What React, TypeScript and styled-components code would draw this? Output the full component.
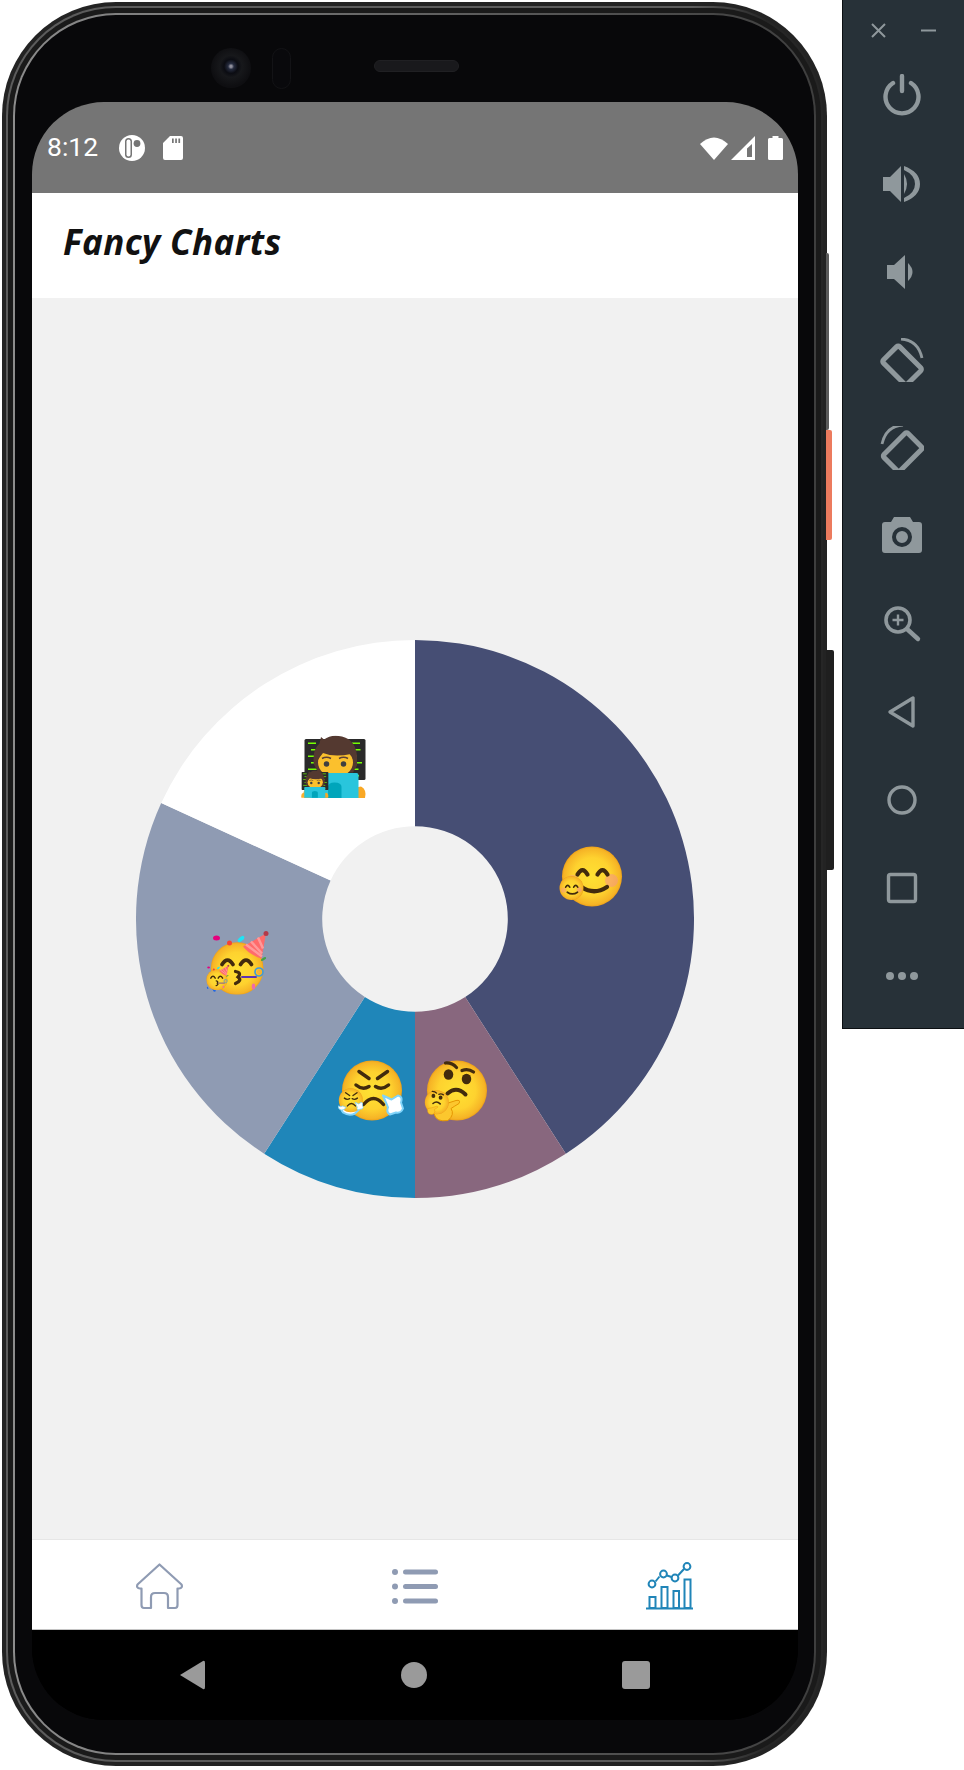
import React from 'react';
import styled, { createGlobalStyle } from 'styled-components';

const GlobalStyle = createGlobalStyle`
    html, body {
        margin: 0;
        padding: 0;
        background: #ffffff;
    }
`;

const Page = styled.div`
    width: 964px;
    height: 1770px;
    display: flex;
    justify-content: space-between;
    align-items: flex-start;
    overflow: hidden;
`;

const Shell = styled.div`
    position: relative;
    box-sizing: border-box;
    width: 825px;
    height: 1764px;
    margin: 2px 0 0 2px;
    padding: 4px;
    border-radius: 114px;
    background: #232323;
`;

const RimLight = styled.div`
    box-sizing: border-box;
    height: 100%;
    padding: 2px;
    border-radius: 110px;
    background: linear-gradient(90deg, #5c5c5c 0%, #5c5c5c 84%, #262626 93%);
`;

const RimDark = styled.div`
    box-sizing: border-box;
    height: 100%;
    padding: 5px;
    border-radius: 108px;
    background: #1a1a1a;
`;

const RimInner = styled.div`
    box-sizing: border-box;
    height: 100%;
    padding: 2px;
    border-radius: 103px;
    background: linear-gradient(90deg, #8c8c8c 0%, #5a5a5a 60%, #3e3e3e 100%);
`;

const Bezel = styled.div`
    box-sizing: border-box;
    height: 100%;
    display: flex;
    flex-direction: column;
    padding: 0 16px 33px 17px;
    border-radius: 101px;
    background: #08080a;
`;

const SideKey = styled.div<{ $top: number; $height: number; $width: number; $color: string }>`
    position: absolute;
    left: 824px;
    top: ${(p) => p.$top}px;
    width: ${(p) => p.$width}px;
    height: ${(p) => p.$height}px;
    border-radius: 0 2px 2px 0;
    background: ${(p) => p.$color};
`;

const Earpiece = styled.div`
    height: 87px;
    flex-shrink: 0;
    display: flex;
    align-items: center;
    padding: 19px 0 0 179px;
    box-sizing: border-box;
`;

const Lens = styled.div`
    width: 40px;
    height: 40px;
    border-radius: 50%;
    background: radial-gradient(circle at 50% 46%, #8f8f9c 0 1px, #252b3e 3px, #0b0c12 7px, #17181b 11px, #0e0e11 20px);
`;

const Sensor = styled.div`
    box-sizing: border-box;
    width: 19px;
    height: 41px;
    margin-left: 21px;
    border: 1px solid #131316;
    border-radius: 10px;
    background: #09090c;
`;

const Speaker = styled.div`
    box-sizing: border-box;
    width: 85px;
    height: 12px;
    margin: 0 0 4px 83px;
    border: 1px solid #202023;
    border-radius: 6px;
    background: #19191c;
`;

const Screen = styled.div`
    flex: 1;
    display: flex;
    flex-direction: column;
    overflow: hidden;
    border-radius: 72px;
    background: #000000;
`;

const StatusBar = styled.div`
    height: 91px;
    flex-shrink: 0;
    box-sizing: border-box;
    display: flex;
    align-items: center;
    padding: 0 15px 0 15px;
    background: #757575;
    color: #ffffff;
    font-family: Roboto, 'Liberation Sans', sans-serif;
    font-size: 26.5px;
`;

const Clock = styled.span`
    width: 72px;
    line-height: 1;
`;

const StatusGroup = styled.div<{ $gap: number; $left?: number }>`
    display: flex;
    align-items: center;
    column-gap: ${(p) => p.$gap}px;
    margin-left: ${(p) => p.$left ?? 0}px;
`;

const StatusSpacer = styled.div`
    flex: 1;
`;

const Header = styled.div`
    height: 105px;
    flex-shrink: 0;
    box-sizing: border-box;
    display: flex;
    align-items: center;
    padding: 0 0 9px 31px;
    background: #ffffff;
`;

const Title = styled.h1`
    margin: 0;
    font-family: 'Noto Sans', sans-serif;
    font-size: 35px;
    font-weight: 700;
    font-style: italic;
    color: #111111;
    letter-spacing: 0.4px;
`;

const Content = styled.div`
    flex: 1;
    display: flex;
    align-items: center;
    justify-content: center;
    background: #f1f1f1;
`;

const TabBar = styled.div`
    height: 91px;
    flex-shrink: 0;
    box-sizing: border-box;
    display: grid;
    grid-template-columns: repeat(3, 1fr);
    border-top: 1px solid #e6e6e6;
    border-bottom: 1px solid #c4c4c4;
    background: #ffffff;
`;

const Tab = styled.div<{ $top: number }>`
    display: flex;
    justify-content: center;
    align-items: flex-start;
    padding-top: ${(p) => p.$top}px;
`;

const NavBar = styled.div`
    height: 90px;
    flex-shrink: 0;
    box-sizing: border-box;
    display: flex;
    align-items: center;
    justify-content: space-between;
    padding: 0 148px 0 147px;
    background: #000000;
`;

const NavHome = styled.div`
    width: 26px;
    height: 26px;
    border-radius: 50%;
    background: #9a9a9a;
`;

const NavRecents = styled.div`
    width: 28px;
    height: 28px;
    border-radius: 3px;
    background: #9a9a9a;
`;

const Toolbar = styled.div`
    box-sizing: border-box;
    width: 122px;
    height: 1029px;
    border: 1px solid #0b0f12;
    border-top: none;
    border-right: none;
    background: #273138;
    color: #8f989c;
`;

const ToolbarTop = styled.div`
    height: 52px;
    box-sizing: border-box;
    display: flex;
    align-items: center;
    justify-content: space-between;
    padding: 8px 28px 0 28px;
`;

const ToolButton = styled.div`
    height: 88px;
    display: flex;
    align-items: center;
    justify-content: center;
    padding-right: 3px;
`;

type SliceData = { value: number; color: string };

const slices: SliceData[] = [
    { value: 45, color: '#464e74' },
    { value: 10, color: '#88677e' },
    { value: 10, color: '#1f86b9' },
    { value: 25, color: '#8f9bb3' },
    { value: 20, color: '#ffffff' },
];

const OUTER = 279;
const INNER = 92.8;

function polar(radius: number, angle: number) {
    const a = (angle * Math.PI) / 180;
    return `${(radius * Math.sin(a)).toFixed(2)} ${(-radius * Math.cos(a)).toFixed(2)}`;
}

function slicePath(start: number, end: number) {
    const large = end - start > 180 ? 1 : 0;
    return `M${polar(OUTER, start)} A${OUTER} ${OUTER} 0 ${large} 1 ${polar(OUTER, end)} L${polar(INNER, end)} A${INNER} ${INNER} 0 ${large} 0 ${polar(INNER, start)} Z`;
}

function FaceBase({ id }: { id: string }) {
    return (
        <>
            <defs>
                <radialGradient id={id} cx="50%" cy="50%" r="52%">
                    <stop offset="0%" stopColor="#fee133" />
                    <stop offset="60%" stopColor="#fed22f" />
                    <stop offset="90%" stopColor="#f6b426" />
                    <stop offset="100%" stopColor="#e8940f" />
                </radialGradient>
            </defs>
            <circle cx="64" cy="64" r="60" fill={`url(#${id})`} />
        </>
    );
}

function SmilingGlyph({ id }: { id: string }) {
    return (
        <>
            <FaceBase id={id} />
            <circle cx="25" cy="74" r="13" fill="#f59a80" opacity="0.55" />
            <circle cx="103" cy="72" r="13" fill="#f59a80" opacity="0.6" />
            <path d="M35 60 Q45 42 55 60 M75 60 Q85 42 95 60" fill="none" stroke="#422b0d" strokeWidth="8.5" strokeLinecap="round" />
            <path d="M43 85 Q68 102 94 85" fill="none" stroke="#422b0d" strokeWidth="8.5" strokeLinecap="round" />
        </>
    );
}

function ThinkingGlyph({ id }: { id: string }) {
    return (
        <>
            <FaceBase id={id} />
            <ellipse cx="47" cy="32" rx="9.5" ry="10.5" fill="#422b0d" />
            <ellipse cx="83" cy="41" rx="9.5" ry="10.5" fill="#422b0d" />
            <path d="M41 9 Q54 8 63 18 M74 24 Q86 19 97 27" fill="none" stroke="#422b0d" strokeWidth="6.5" strokeLinecap="round" />
            <path d="M45 70 Q63 54 81 72" fill="none" stroke="#422b0d" strokeWidth="8" strokeLinecap="round" />
            <path d="M18 96 Q40 92 62 84 Q72 82 68 90 Q58 96 52 100 Q60 112 46 124 Q22 128 18 110 Z" fill="#fcc72e" stroke="#e59600" strokeWidth="2" />
        </>
    );
}

function SteamGlyph({ id }: { id: string }) {
    return (
        <>
            <FaceBase id={id} />
            <path d="M38 26 L58 40 M95 26 L75 40" fill="none" stroke="#422b0d" strokeWidth="7" strokeLinecap="round" />
            <path d="M32 53 Q45 64 58 56 M71 56 Q84 64 97 53" fill="none" stroke="#422b0d" strokeWidth="7" strokeLinecap="round" />
            <path d="M47 92 Q67 68 87 92" fill="none" stroke="#422b0d" strokeWidth="7" strokeLinecap="round" />
            <path d="M86 74 L103 82 L116 74 Q126 76 122 88 L126 100 Q122 110 112 108 L100 112 Q92 108 96 98 Z" fill="#ffffff" stroke="#81d4fa" strokeWidth="4" strokeLinejoin="round" />
            <path d="M2 92 L14 96 L24 92 L40 100 L30 110 Q18 116 6 108 Q0 100 2 92 Z" fill="#ffffff" stroke="#81d4fa" strokeWidth="4" strokeLinejoin="round" />
        </>
    );
}

function PartyGlyph({ id }: { id: string }) {
    return (
        <>
            <g transform="translate(8 20) scale(0.88)">
                <FaceBase id={id} />
            </g>
            <path d="M122 6 L76 32 Q88 48 113 56 Z" fill="#ff6b6b" />
            <path d="M106 14 L116 36 M92 22 L114 46 M82 28 L114 52" stroke="#ff9a9a" strokeWidth="5" fill="none" />
            <circle cx="122" cy="6" r="5" fill="#b33a4a" />
            <path d="M34 68 Q45 50 56 68 M71 68 Q82 50 93 68" fill="none" stroke="#422b0d" strokeWidth="7.5" strokeLinecap="round" />
            <path d="M61 82 Q74 84 66 93 Q75 100 61 106" fill="none" stroke="#422b0d" strokeWidth="6.5" strokeLinecap="round" />
            <path d="M74 93 H102" stroke="#5e35b1" strokeWidth="4" strokeLinecap="round" />
            <circle cx="108" cy="83" r="8" fill="none" stroke="#3f9bdb" strokeWidth="3.4" />
            <circle cx="108" cy="83" r="3" fill="none" stroke="#f4a742" strokeWidth="2" />
            <ellipse cx="23" cy="15" rx="7" ry="5" fill="#e6007e" />
            <circle cx="49" cy="25" r="5" fill="#f44336" />
            <ellipse cx="72" cy="17" rx="8" ry="4" fill="#1fe3f5" transform="rotate(-40 72 17)" />
            <ellipse cx="117" cy="57" rx="6" ry="2.5" fill="#43a047" transform="rotate(-30 117 57)" />
            <ellipse cx="97" cy="112" rx="3.5" ry="6" fill="#f06ba8" />
            <ellipse cx="18" cy="117" rx="3" ry="6" fill="#1e66e5" transform="rotate(-25 18 117)" />
        </>
    );
}

function CoderGlyph() {
    const rows = [14, 27, 40, 53, 66, 79];
    return (
        <>
            <rect x="3" y="7" width="122" height="82" rx="3" fill="#2a2a2a" />
            {rows.map((y, i) => (
                <g key={y}>
                    <rect x={10 + (i % 2) * 6} y={y} width={16 + (i % 3) * 6} height="3" fill="#76ff03" />
                    <rect x={98 + (i % 2) * 4} y={y} width={16 - (i % 3) * 3} height="3" fill="#76ff03" />
                </g>
            ))}
            <path d="M22 58 Q18 30 40 18 H90 Q110 30 108 60 L100 74 H30 Z" fill="#543930" />
            <ellipse cx="65" cy="54" rx="35" ry="29" fill="#fbc02d" />
            <path d="M28 52 Q34 42 40 35 Q62 44 96 37 Q100 43 101 52 L108 52 Q110 10 78 2 Q56 -3 42 8 L36 3 L33 16 Q18 28 22 58 Z" fill="#543930" />
            <circle cx="47" cy="57" r="5.5" fill="#404040" />
            <circle cx="81" cy="57" r="5.5" fill="#404040" />
            <path d="M38 46 Q47 41 56 46 M72 46 Q81 41 90 46" fill="none" stroke="#5d4037" strokeWidth="3" />
            <path d="M2 125 Q-2 108 10 102 L20 104 V125 Z" fill="#fbb02d" />
            <path d="M124 125 Q128 108 116 102 L106 104 V125 Z" fill="#f9a825" />
            <path d="M15 79 Q15 75 19 75 H107 Q111 75 111 79 V125 H15 Z" fill="#29c5dc" />
            <path d="M50 125 V103 Q50 94 63 94 Q77 94 77 103 V125 Z" fill="#00a5bb" />
        </>
    );
}

type EmojiProps = { x: number; y: number; size: number; children: React.ReactNode };

function Emoji({ x, y, size, children }: EmojiProps) {
    return (
        <svg x={x - 415} y={y - 918.5} width={size} height={size} viewBox="0 0 128 128">
            {children}
        </svg>
    );
}

function DonutChart() {
    const total = slices.reduce((sum, s) => sum + s.value, 0);
    let angle = 0;
    return (
        <svg width={558} height={558} viewBox="-279 -279 558 558">
            {slices.map((s) => {
                const start = angle;
                angle += (s.value / total) * 360;
                return <path key={s.color} d={slicePath(start, angle)} fill={s.color} />;
            })}
            <Emoji x={560} y={844} size={64}><SmilingGlyph id="smileA" /></Emoji>
            <Emoji x={558.7} y={874.7} size={25.6}><SmilingGlyph id="smileB" /></Emoji>
            <Emoji x={425} y={1058} size={64}><ThinkingGlyph id="thinkA" /></Emoji>
            <Emoji x={424} y={1089} size={25.6}><ThinkingGlyph id="thinkB" /></Emoji>
            <Emoji x={340} y={1058} size={64}><SteamGlyph id="steamA" /></Emoji>
            <Emoji x={338} y={1087} size={25.6}><SteamGlyph id="steamB" /></Emoji>
            <Emoji x={205} y={930} size={64}><PartyGlyph id="partyA" /></Emoji>
            <Emoji x={204} y={964} size={25.6}><PartyGlyph id="partyB" /></Emoji>
            <Emoji x={303} y={735} size={64}><CoderGlyph /></Emoji>
            <Emoji x={301} y={770} size={28}><CoderGlyph /></Emoji>
        </svg>
    );
}

function HomeIcon() {
    return (
        <svg width="48" height="47" viewBox="0 0 48 47" fill="none" stroke="#8f9bb3" strokeWidth="2.2" strokeLinejoin="round">
            <path d="M23.5 1.5 L45.5 21.5 Q47 25 43 25.5 H41.5 V42 Q41.5 45 39 45 H32 V34 Q32 30 28 30 H19 Q15 30 15 34 V45 H8 Q5.5 45 5.5 42 V25.5 H4 Q0 25 1.5 21.5 Z" />
        </svg>
    );
}

function ListIcon() {
    return (
        <svg width="46" height="36" viewBox="0 0 46 36" fill="#8f9bb3">
            <circle cx="3" cy="4" r="3" />
            <circle cx="3" cy="18.5" r="3" />
            <circle cx="3" cy="33" r="3" />
            <rect x="11" y="1.5" width="35" height="5" rx="2.5" />
            <rect x="11" y="16" width="35" height="5" rx="2.5" />
            <rect x="11" y="30.5" width="35" height="5" rx="2.5" />
        </svg>
    );
}

function ChartIcon() {
    return (
        <svg width="48" height="48" viewBox="0 0 48 48" fill="none" stroke="#2085b8" strokeWidth="2">
            <path d="M9.5 19.5 L13.5 14.5 M21 13.5 L25.5 15 M32 13.5 L38 7" />
            <circle cx="6" cy="22" r="3.4" />
            <circle cx="17.5" cy="12" r="3.4" />
            <circle cx="29" cy="16" r="3.4" />
            <circle cx="41" cy="4.5" r="3.4" />
            <rect x="3.5" y="35" width="6" height="11" />
            <rect x="15.5" y="25" width="6" height="21" />
            <rect x="27.5" y="29" width="5.5" height="17" />
            <rect x="38.5" y="17.5" width="6" height="28.5" />
            <path d="M0 46.5 H47" />
        </svg>
    );
}

function CastBadge() {
    return (
        <svg width="26" height="26" viewBox="0 0 26 26">
            <circle cx="13" cy="13" r="13" fill="#ffffff" />
            <rect x="6" y="3" width="7" height="20" rx="3.5" fill="#757575" />
            <rect x="7.5" y="4.5" width="4" height="17" rx="2" fill="#ffffff" />
            <circle cx="18" cy="8.5" r="3.4" fill="#757575" />
        </svg>
    );
}

function SdCard() {
    return (
        <svg width="20" height="24" viewBox="0 0 20 24">
            <path fillRule="evenodd" fill="#ffffff" d="M7 0 H18 Q20 0 20 2 V22 Q20 24 18 24 H2 Q0 24 0 22 V7 Z M9 2.5 V7 H10.7 V2.5 Z M12.2 2.5 V7 H13.9 V2.5 Z M15.4 2.5 V7 H17.1 V2.5 Z" />
        </svg>
    );
}

function WifiIcon() {
    return (
        <svg width="28" height="24" viewBox="0 0 28 24">
            <path d="M14 24 L0 8 Q14 -5 28 8 Z" fill="#ffffff" />
        </svg>
    );
}

function SignalIcon() {
    return (
        <svg width="24" height="24" viewBox="0 0 24 24">
            <path fillRule="evenodd" fill="#ffffff" d="M24 0 V24 H0 Z M21 8 L16 12.5 V21 H21 Z" />
        </svg>
    );
}

function BatteryIcon() {
    return (
        <svg width="15" height="24" viewBox="0 0 15 24">
            <path fill="#ffffff" d="M4.5 0 H10.5 V2 H13.5 Q15 2 15 3.5 V22.5 Q15 24 13.5 24 H1.5 Q0 24 0 22.5 V3.5 Q0 2 1.5 2 H4.5 Z" />
        </svg>
    );
}

const toolIcons: React.ReactNode[] = [
    <path key="power" d="M13 9 A16.5 16.5 0 1 0 31 9 M22 2 V17" fill="none" stroke="currentColor" strokeWidth="4.4" strokeLinecap="round" />,
    <g key="volume-up" fill="currentColor">
        <path d="M3 15 H10 L21 4 V40 L10 29 H3 Z" />
        <path d="M24 12 Q30 22 24 32 Z" />
        <path d="M24 4 Q40 10 40 22 Q40 34 24 40 V36 Q35 31 35 22 Q35 13 24 8 Z" />
    </g>,
    <g key="volume-down" fill="currentColor">
        <path d="M7 15 H14 L25 5 V39 L14 29 H7 Z" />
        <path d="M28 13 Q37 22 28 31 Z" />
    </g>,
    <g key="rotate-left" fill="none" stroke="currentColor" strokeWidth="5" strokeLinejoin="round">
        <rect x="10" y="11" width="23" height="34" rx="2" transform="rotate(-45 21 27)" />
        <path d="M21 1 Q38 2 42 20" strokeWidth="2.8" />
    </g>,
    <g key="rotate-right" fill="none" stroke="currentColor" strokeWidth="5" strokeLinejoin="round" transform="translate(0 -2)">
        <rect x="12" y="11" width="23" height="34" rx="2" transform="rotate(45 23 27)" />
        <path d="M23 1 Q6 2 2 20" strokeWidth="2.8" />
    </g>,
    <g key="camera" transform="translate(0 -1)">
        <path fill="currentColor" d="M14 4 H30 L33 9 H39 Q42 9 42 12 V37 Q42 40 39 40 H5 Q2 40 2 37 V12 Q2 9 5 9 H11 Z" />
        <circle cx="22" cy="24" r="8" fill="none" stroke="#273138" strokeWidth="4" />
    </g>,
    <g key="zoom" fill="none" stroke="currentColor" strokeWidth="3.6">
        <circle cx="18" cy="18" r="12" />
        <path d="M27 27 L38 37" strokeWidth="4.4" strokeLinecap="round" />
        <path d="M18 12.5 V23.5 M12.5 18 H23.5" strokeWidth="2.4" />
    </g>,
    <path key="back" d="M10 22 L33 8 V36 Z" fill="none" stroke="currentColor" strokeWidth="3.4" strokeLinejoin="round" />,
    <circle key="home" cx="22" cy="22" r="13" fill="none" stroke="currentColor" strokeWidth="3.4" />,
    <rect key="square" x="8.5" y="8.5" width="27" height="27" rx="2" fill="none" stroke="currentColor" strokeWidth="3.4" />,
    <g key="more" fill="currentColor">
        <circle cx="10" cy="22" r="4" />
        <circle cx="22" cy="22" r="4" />
        <circle cx="34" cy="22" r="4" />
    </g>,
];

export default function App() {
    return (
        <Page>
            <GlobalStyle />
            <Shell>
                <RimLight>
                    <RimDark>
                        <RimInner>
                            <Bezel>
                                <Earpiece>
                                    <Lens />
                                    <Sensor />
                                    <Speaker />
                                </Earpiece>
                                <Screen>
                                    <StatusBar>
                                        <Clock>8:12</Clock>
                                        <StatusGroup $gap={18}>
                                            <CastBadge />
                                            <SdCard />
                                        </StatusGroup>
                                        <StatusSpacer />
                                        <StatusGroup $gap={3}>
                                            <WifiIcon />
                                            <SignalIcon />
                                        </StatusGroup>
                                        <StatusGroup $gap={0} $left={13}>
                                            <BatteryIcon />
                                        </StatusGroup>
                                    </StatusBar>
                                    <Header>
                                        <Title>Fancy Charts</Title>
                                    </Header>
                                    <Content>
                                        <DonutChart />
                                    </Content>
                                    <TabBar>
                                        <Tab $top={23}><HomeIcon /></Tab>
                                        <Tab $top={28}><ListIcon /></Tab>
                                        <Tab $top={22}><ChartIcon /></Tab>
                                    </TabBar>
                                    <NavBar>
                                        <svg width="26" height="30" viewBox="0 0 26 30">
                                            <path d="M1 15 L24 1 Q26 0 26 3 V27 Q26 30 24 29 Z" fill="#9a9a9a" />
                                        </svg>
                                        <NavHome />
                                        <NavRecents />
                                    </NavBar>
                                </Screen>
                            </Bezel>
                        </RimInner>
                    </RimDark>
                </RimLight>
                <SideKey $top={251} $height={177} $width={3} $color="#5b5b5b" />
                <SideKey $top={428} $height={110} $width={6} $color="#ec7b5e" />
                <SideKey $top={648} $height={220} $width={8} $color="#1f1f1f" />
            </Shell>
            <Toolbar>
                <ToolbarTop>
                    <svg width="15" height="15" viewBox="0 0 15 15" stroke="currentColor" strokeWidth="2">
                        <path d="M1 1 L14 14 M14 1 L1 14" />
                    </svg>
                    <svg width="15" height="15" viewBox="0 0 15 15" stroke="currentColor" strokeWidth="2">
                        <path d="M0 7.5 H15" />
                    </svg>
                </ToolbarTop>
                {toolIcons.map((icon, i) => (
                    <ToolButton key={i}>
                        <svg width="44" height="44" viewBox="0 0 44 44">{icon}</svg>
                    </ToolButton>
                ))}
            </Toolbar>
        </Page>
    );
}
